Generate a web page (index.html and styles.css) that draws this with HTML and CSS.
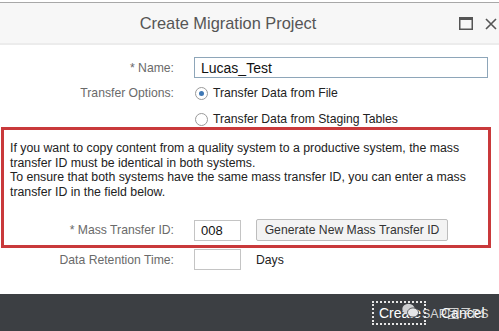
FILE: index.html
```html
<!DOCTYPE html>
<html lang="en">
<head>
  <meta charset="UTF-8" />
  <meta name="viewport" content="width=device-width, initial-scale=1" />
  <title>Create Migration Project</title>
  <link rel="stylesheet" href="styles.css">
</head>
<body>
  <div class="dialog">
    <!-- Title bar -->
    <header class="titlebar">
      <h1 class="title">Create Migration Project</h1>
      <div class="win-icons">
        <svg width="14" height="13" viewBox="0 0 14 13"><rect x="0.75" y="0.75" width="12.5" height="11.5" fill="none" stroke="#555" stroke-width="1.5"/><rect x="0" y="0" width="14" height="3" fill="#555"/></svg>
        <svg width="12" height="12" viewBox="0 0 12 12"><path d="M1 1 L11 11 M11 1 L1 11" stroke="#555" stroke-width="1.6"/></svg>
      </div>
    </header>

    <form class="content">
      <div class="row row-name">
        <label class="lbl" for="name">* Name:</label>
        <input class="field field-name" id="name" type="text" value="Lucas_Test" />
      </div>

      <div class="row row-opt">
        <span class="lbl">Transfer Options:</span>
        <label class="radio"><span class="dot on"></span>Transfer Data from File</label>
      </div>
      <div class="row row-opt2">
        <span class="lbl"></span>
        <label class="radio"><span class="dot"></span>Transfer Data from Staging Tables</label>
      </div>

      <!-- Highlighted block -->
      <section class="highlight">
        <p class="note">If you want to copy content from a quality system to a productive system, the mass transfer ID must be identical in both systems.</p>
        <p class="note">To ensure that both systems have the same mass transfer ID, you can enter a mass transfer ID in the field below.</p>
        <div class="row row-mass">
          <label class="lbl" for="mass">* Mass Transfer ID:</label>
          <div class="inline">
            <input class="field field-small" id="mass" type="text" value="008" />
            <button type="button" class="btn">Generate New Mass Transfer ID</button>
          </div>
        </div>
      </section>

      <div class="row row-ret">
        <label class="lbl" for="ret">Data Retention Time:</label>
        <div class="inline">
          <input class="field field-small" id="ret" type="text" value="" />
          <span class="unit">Days</span>
        </div>
      </div>
    </form>

    <footer class="footer">
      <button type="button" class="fbtn fbtn-create">Create</button>
      <button type="button" class="fbtn">Cancel</button>
      <div class="watermark">
        <svg width="17" height="15" viewBox="0 0 17 15"><ellipse cx="6.5" cy="6" rx="6.2" ry="5.2" fill="#cfd0d2"/><ellipse cx="11" cy="9.5" rx="5.5" ry="4.6" fill="#e4e5e6" stroke="#3c3f43" stroke-width="0.8"/></svg>
        <span>SAP团子PS</span>
      </div>
    </footer>
  </div>
</body>
</html>
```

FILE: styles.css
```css
/* Base */
body {
  margin: 0;
  background: #fff;
  font-family: "Liberation Sans", Arial, "Noto Sans CJK SC", sans-serif;
}
.dialog {
  width: 499px;
  height: 331px;
  padding-top: 2px;
  box-sizing: border-box;
  display: flex;
  flex-direction: column;
  position: relative;
}

/* Title bar */
.titlebar {
  height: 40px;
  background: #f7f7f7;
  border-top: 1px solid #a8a8a8;
  border-bottom: 2px solid #ececec;
  display: flex;
  align-items: center;
  justify-content: center;
  padding-right: 43px;
  position: relative;
}
.title {
  margin: 0;
  font-size: 16.4px;
  font-weight: normal;
  color: #555;
}
.win-icons {
  position: absolute;
  right: 2px;
  top: 14px;
  display: flex;
  gap: 12px;
  align-items: center;
}

/* Form body */
.content {
  flex: 1;
  padding-top: 12px;
  font-size: 12.2px;
}
.row {
  display: grid;
  grid-template-columns: 174px 1fr;
  column-gap: 20px;
  align-items: center;
}
.lbl {
  text-align: right;
  color: #6a6a6a;
}
.field {
  box-sizing: border-box;
  height: 21px;
  border: 1px solid #c4c4c4;
  padding: 0 6px;
  font: inherit;
  font-size: 13px;
  color: #111;
  background: #fff;
}
.field-name {
  width: 294px;
  border-color: #8ea6b9;
  font-size: 14px;
}
.field-small {
  width: 47px;
}
.row-opt {
  margin-top: 8px;
}
.row-opt2 {
  margin-top: 12px;
}
.radio {
  display: flex;
  align-items: center;
  gap: 5px;
  color: #222;
  font-size: 12.2px;
}
.dot {
  width: 13px;
  height: 13px;
  border: 1px solid #9a9a9a;
  border-radius: 50%;
  box-sizing: border-box;
  display: inline-flex;
  align-items: center;
  justify-content: center;
  background: #fff;
  margin-left: 1px;
}
.dot.on::after {
  content: "";
  width: 5px;
  height: 5px;
  border-radius: 50%;
  background: #3f78b5;
}

/* Highlighted block */
.highlight {
  margin: 1px 8px 0 1px;
  border: 3px solid #c9393b;
  padding: 11px 0 2px 6px;
  height: 121px;
  box-sizing: border-box;
}
.note {
  margin: 0;
  color: #222;
  line-height: 14.5px;
  font-size: 12.3px;
  padding-right: 6px;
}
.row-mass {
  grid-template-columns: 164px 1fr;
  margin-top: 20px;
}
.inline {
  display: flex;
  align-items: center;
  gap: 15px;
}
.btn {
  height: 22px;
  width: 192px;
  border: 1px solid #bdbdbd;
  border-radius: 2px;
  background: #f3f3f3;
  font: inherit;
  font-size: 12.2px;
  color: #333;
  padding: 0;
}
.row-ret {
  margin-top: 1px;
}
.unit {
  color: #222;
}

/* Footer */
.footer {
  height: 37px;
  background: #3c3f43;
  display: flex;
  align-items: center;
  padding-left: 372px;
  gap: 8px;
  position: relative;
}
.fbtn {
  background: none;
  border: 2px solid transparent;
  color: #fff;
  font: inherit;
  font-size: 14px;
  padding: 2px 5px;
  height: 24px;
}
.fbtn-create {
  border: 2px dotted #e6e6e6;
  width: 54px;
}
.watermark {
  position: absolute;
  left: 402px;
  top: 9px;
  display: flex;
  align-items: flex-start;
  gap: 3px;
  color: rgba(230, 230, 230, 0.9);
  font-size: 12.5px;
}
```
